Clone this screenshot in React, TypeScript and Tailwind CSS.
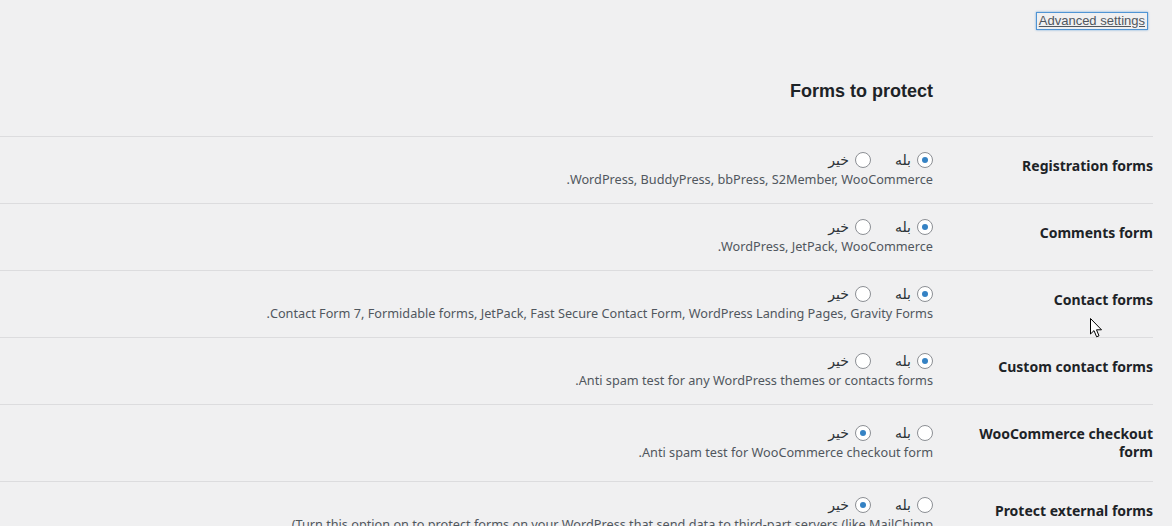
import React from "react";

type Row = {
  label: string;
  yes: boolean;
  desc: string;
  ltr?: boolean;
};

const rows: Row[] = [
  {
    label: "Registration forms",
    yes: true,
    desc: "WordPress, BuddyPress, bbPress, S2Member, WooCommerce.",
  },
  {
    label: "Comments form",
    yes: true,
    desc: "WordPress, JetPack, WooCommerce.",
  },
  {
    label: "Contact forms",
    yes: true,
    desc: "Contact Form 7, Formidable forms, JetPack, Fast Secure Contact Form, WordPress Landing Pages, Gravity Forms.",
  },
  {
    label: "Custom contact forms",
    yes: true,
    desc: "Anti spam test for any WordPress themes or contacts forms.",
  },
  {
    label: "WooCommerce checkout form",
    yes: false,
    desc: "Anti spam test for WooCommerce checkout form.",
  },
  {
    label: "Protect external forms",
    yes: false,
    // shown as the rtl page renders it: closing bracket mirrored to the left
    desc: "(Turn this option on to protect forms on your WordPress that send data to third-part servers (like MailChimp",
    ltr: true,
  },
];

const Radio = ({ checked }: { checked: boolean }) => (
  <span className="w-4 h-4 rounded-full border border-[#8c8f94] bg-white flex items-center justify-center shrink-0">
    {checked && <span className="w-[6px] h-[6px] rounded-full bg-[#3582c4]" />}
  </span>
);

const SettingRow = ({ row }: { row: Row }) => (
  <div className="flex border-t border-[#dcdcde]">
    <div className="w-[210px] pl-[10px] pt-5 pb-5 text-right shrink-0 text-[14px] leading-[18px] font-bold text-[#1d2327]">
      {row.label}
    </div>
    <div className="flex-1 flex flex-col justify-center py-[15px] px-[10px]">
      <div className="flex items-center h-4 text-[14px] text-[#2c3338] font-['DejaVu_Sans',sans-serif]">
        <Radio checked={row.yes} />
        <span className="mr-[6px] ml-[24px] leading-4">بله</span>
        <Radio checked={!row.yes} />
        <span className="mr-[6px] leading-4">خير</span>
      </div>
      <p
        dir={row.ltr ? "ltr" : undefined}
        className="mt-[2px] text-right text-[12.7px] leading-[18px] text-[#50575e] whitespace-nowrap"
      >
        {row.desc}
      </p>
    </div>
  </div>
);

const Cursor = () => (
  <svg className="absolute left-[1090px] top-[318px]" width="13" height="20" viewBox="0 0 13 20">
    <path d="M0.5 0.5 L0.5 16 L4 12.6 L6.6 18.8 L9 17.8 L6.5 11.8 L11.5 11.8 Z" fill="#fff" stroke="#000" strokeWidth="1" strokeLinejoin="round" />
  </svg>
);

export default function App() {
  return (
    <div dir="rtl" className="relative w-[1172px] h-[526px] overflow-hidden bg-[#f0f0f1] font-['Noto_Sans',sans-serif]">
      <div className="flex pr-[25px] pt-[13px]">
        <a
          href="#"
          className="px-[2px] text-[13px] leading-[16px] text-[#50575e] underline font-['Liberation_Sans',sans-serif] outline outline-1 outline-[#4f94d4] shadow-[0_0_2px_1px_rgba(79,148,212,0.8)]"
        >
          Advanced settings
        </a>
      </div>
      <h2 className="mt-[50px] mr-[239px] text-[18px] leading-[24px] font-bold text-[#1d2327] font-['Liberation_Sans',sans-serif]">
        Forms to protect
      </h2>
      <div className="mt-[33px] mr-[19px]">
        {rows.map((r) => (
          <SettingRow key={r.label} row={r} />
        ))}
      </div>
      <Cursor />
    </div>
  );
}
